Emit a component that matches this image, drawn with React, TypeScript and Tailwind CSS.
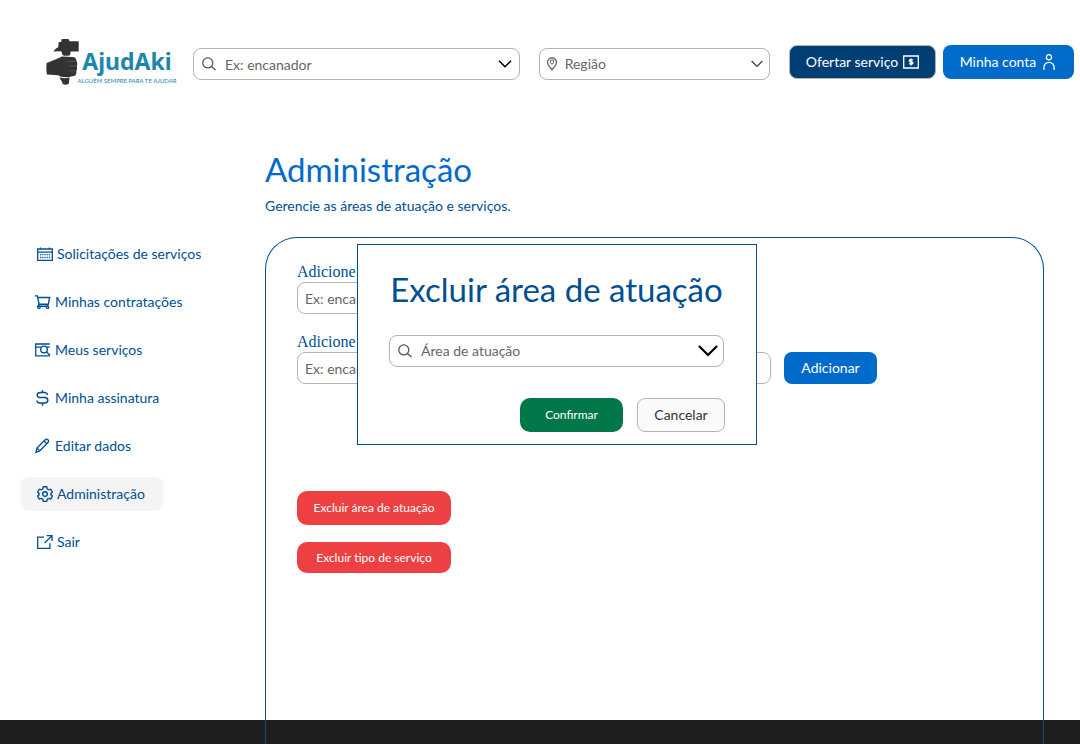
import React from "react";

type IconProps = { className?: string };

function Svg({ className = "size-4", children }: { className?: string; children: React.ReactNode }) {
  return (
    <svg
      viewBox="0 0 16 16"
      className={`shrink-0 ${className}`}
      fill="none"
      stroke="currentColor"
      strokeWidth="1.3"
      aria-hidden="true"
    >
      {children}
    </svg>
  );
}

const SearchIcon = ({ className }: IconProps) => (
  <Svg className={className}>
    <circle cx="6.800" cy="6.900" r="5" />
    <path d="M10.400 10.500 14.600 14" />
  </Svg>
);

const PinIcon = ({ className }: IconProps) => (
  <Svg className={className}>
    <path d="M8 13.800C5.400 10.900 3.500 8.700 3.500 6.300a4.500 4.300 0 0 1 9 0C12.500 8.700 10.600 10.900 8 13.800Z" />
    <path d="M6.500 4.200h3v2.300a1.500 1.500 0 0 1-3 0Z" strokeWidth="1" />
  </Svg>
);

const Chevron = ({ className }: IconProps) => (
  <svg viewBox="0 0 20 12" className={className} fill="none" stroke="currentColor" strokeWidth="2.200" aria-hidden="true">
    <path d="m1 1 9 9 9-9" />
  </svg>
);

const MoneyIcon = () => (
  <Svg>
    <path d="M.7 2h14.600v12H.7Z" />
    <path d="M9.800 6.300c-.6-.8-3.500-.9-3.500.4 0 1.500 3.600.8 3.600 2.400 0 1.300-3 1.200-3.700.3M8 4.500v7" strokeWidth="1.500" />
  </Svg>
);

const UserIcon = () => (
  <Svg>
    <circle cx="8" cy="3.200" r="2.600" />
    <path d="M2.900 15.900v-2.500a5.100 5.100 0 0 1 10.200 0v2.500" />
  </Svg>
);

const CalendarIcon = () => (
  <Svg>
    <path d="M.7 3h14.600v11.300H.7ZM.7 6.200h14.600M3.600 1.400V3M12.400 1.400V3" />
    <path d="M3 8.700h10.500M3 11.500h10.500" strokeDasharray="1.200 1" />
  </Svg>
);

const CartIcon = () => (
  <Svg>
    <path d="M0 1.900h2.400l1.700 8.400h9.200L14.700 3.500H2.800M4.100 10.300l-1.200 2h10.600" strokeWidth="1.400" />
    <circle cx="4" cy="13.200" r="1.200" />
    <circle cx="12.500" cy="13.200" r="1.200" />
  </Svg>
);

const BrowseIcon = () => (
  <Svg>
    <path d="M14.800 2H.7v11.800h14.100M.7 5.200h5.100M12 5.200h2.800" />
    <circle cx="9" cy="7.400" r="3.300" strokeWidth="1.400" />
    <path d="m11.200 9.700 3.800 3.600" strokeWidth="1.400" />
  </Svg>
);

const DollarIcon = () => (
  <Svg>
    <path
      d="M12.400 4.900c0-1.700-1.400-2.500-3-2.500H5.800C4 2.400 2.200 3.400 2.200 5S4 7.600 5.800 7.600h3.600c1.900 0 3.400 1 3.400 2.700s-1.500 2.700-3.400 2.700H5.600c-1.800 0-3.600-.9-3.600-2.600M7.500.3v2.100M7.500 13v2.700"
      strokeWidth="1.500"
    />
  </Svg>
);

const PencilIcon = () => (
  <Svg>
    <path d="m1 14.300 1-4.300 8.200-8.200c1.900-1.800 4.500.8 2.700 2.700L4.700 12.900 1 14.300Z" strokeWidth="1.400" />
    <path d="m9 3 2.900 2.900M2.300 10.100l2.400 2.500" />
  </Svg>
);

const GearIcon = () => (
  <Svg>
    <path
      d="M6.300.8h3.400l.5 2.100 1.500.9 2.100-.6 1.600 2.800-1.500 1.600v1l1.500 1.600-1.600 2.800-2.100-.6-1.500.9-.5 2.100H6.300l-.5-2.100-1.500-.9-2.100.6L.6 10.200l1.500-1.600v-1L.6 6l1.600-2.800 2.100.6 1.500-.9Z"
      strokeWidth="1.400"
    />
    <circle cx="8" cy="8.100" r="2.300" strokeWidth="1.400" />
  </Svg>
);

const ExitIcon = () => (
  <Svg>
    <path d="M7 3.200H.7v11.200h12.200V9.300M9.700 1.700h5.300V7M14.900 1.800 7.600 9" />
  </Svg>
);

const Logo = () => (
  <a href="#" className="flex shrink-0 items-center text-[#1c86ae]" aria-label="AjudAki">
    <svg viewBox="0 0 34 47" className="h-[47px] w-[34px] shrink-0" fill="#333" aria-hidden="true">
      <path d="M15.300.5 16.500 0h6l1 2.300h9.200v10.200h-8l-.7 3.800c-2.500.8-5 .7-7.300 0l-1.400-4-8 .2c1.400-1.800 2.900-3.200 4.900-4.200l.5-5.300h2.600Z" />
      <path d="M.7 23.900 10.500 20l5.500-2.500 10.500.4c2.400.1 4 1.400 4 4.200 1 1.800.9 3.500.2 5.200.6 1.700.4 3.300-.3 4.700.3 3.300-1 5.300-3.800 5.300l-4.600.9-6.200-.3-3.800-1.600L.9 35.400c-.7-3.800-.7-7.700-.2-11.500Z" />
      <path d="M21.500 22.300h8M22.500 27h7.500M22.500 31.800h7" stroke="#777" strokeWidth=".5" />
      <path d="M13.500 38.300c3.500 1.300 6.500 1.300 10 .2l-.6 6c-2.200 1.700-4.400 1.700-6.400.3-.3-2.900-2-3.400-3-6.500Z" />
    </svg>
    <span className="flex w-[94px] flex-col items-center pt-2">
      <span className="font-['Noto_Sans'] text-[23px] leading-[24px] font-bold">AjudAki</span>
      <span className="pt-1 font-['Lato'] text-[6px] leading-[8px] whitespace-nowrap">ALGUÉM SEMPRE PARA TE AJUDAR</span>
    </span>
  </a>
);

const navItems = [
  { label: "Solicitações de serviços", Icon: CalendarIcon, wide: true },
  { label: "Minhas contratações", Icon: CartIcon, wide: false },
  { label: "Meus serviços", Icon: BrowseIcon, wide: false },
  { label: "Minha assinatura", Icon: DollarIcon, wide: false },
  { label: "Editar dados", Icon: PencilIcon, wide: false },
  { label: "Administração", Icon: GearIcon, wide: true, active: true },
  { label: "Sair", Icon: ExitIcon, wide: true },
];

const field =
  "h-8 w-full appearance-none rounded-lg border border-[#b3b3b3] bg-white text-sm text-[#666] placeholder:text-[#666] placeholder:opacity-100";

const dangerButton =
  "w-[154px] rounded-[10px] bg-[#ed4043] text-center text-xs text-white";

export default function App() {
  return (
    <div className="flex min-h-screen flex-col bg-white font-['Lato',sans-serif] text-sm text-[#004f92]">
      <header className="flex items-start pt-[39px] pr-1.5 pl-[46px]">
        <Logo />
        <div className="relative mt-[9px] ml-[19px] min-w-0 flex-[24]">
          <SearchIcon className="absolute top-2 left-2 size-4 text-[#555]" />
          <input aria-label="Serviço" placeholder="Ex: encanador" className={`${field} pr-10 pl-[31px]`} />
          <button aria-label="Mostrar serviços" className="absolute top-0 right-2 flex h-8 items-center text-black">
            <Chevron className="h-2 w-[14px]" />
          </button>
        </div>
        <div className="relative mt-[9px] ml-[19px] min-w-0 flex-[17]">
          <PinIcon className="absolute top-2 left-[5px] size-4 text-[#666]" />
          <select aria-label="Região" className={`${field} pr-8 pl-[25px]`}>
            <option>Região</option>
          </select>
          <Chevron className="pointer-events-none absolute top-3 right-[7px] h-2 w-3 text-[#333f48]" />
        </div>
        <div className="mt-1.5 ml-[19px] flex shrink-0 gap-[7px] whitespace-nowrap text-white">
          <button className="flex h-[34px] w-[147px] items-center justify-center gap-[5px] rounded-lg border border-[#b3b3b3] bg-[#003e74]">
            Ofertar serviço <MoneyIcon />
          </button>
          <button className="flex h-[34px] w-[131px] items-center justify-center gap-[5px] rounded-lg bg-[#006bcb]">
            Minha conta <UserIcon />
          </button>
        </div>
      </header>

      <div className="flex flex-1 pt-[62px]">
        <nav className="flex w-[265px] shrink-0 flex-col items-start gap-[14px] pt-[89px] pl-[21px]">
          {navItems.map(({ label, Icon, wide, active }) => (
            <a
              key={label}
              href="#"
              aria-current={active ? "page" : undefined}
              className={`flex h-[34px] items-center gap-1 rounded-lg pr-[18px] ${wide ? "pl-4" : "pl-3.5"} ${active ? "bg-[#f4f4f4]" : ""}`}
            >
              <Icon />
              {label}
            </a>
          ))}
        </nav>

        <main className="relative z-10 -mb-6 flex min-w-0 flex-1 flex-col pr-9">
          <h1 className="text-[33px] leading-[42px] text-[#006bcb]">Administração</h1>
          <p className="pt-1.5 leading-5">Gerencie as áreas de atuação e serviços.</p>

          <section className="relative mt-[21px] flex flex-1 flex-col items-start rounded-t-[32px] border border-b-0 border-[#004f92] px-[31px] pt-6">
            <label htmlFor="area" className="font-['Liberation_Serif',serif] text-base leading-5">
              Adicione
            </label>
            <div className="flex w-[440px]">
              <input id="area" placeholder="Ex: encanador" className={`${field} px-[7px]`} />
            </div>
            <label htmlFor="tipo" className="mt-[18px] font-['Liberation_Serif',serif] text-base leading-5">
              Adicione
            </label>
            <div className="flex w-[580px] gap-[13px]">
              <input id="tipo" placeholder="Ex: encanador" className={`${field} min-w-0 px-[7px]`} />
              <button className="h-8 w-[93px] shrink-0 rounded-lg bg-[#006bcb] text-white">Adicionar</button>
            </div>
            <button className={`${dangerButton} mt-[107px] h-[34px]`}>Excluir área de atuação</button>
            <button className={`${dangerButton} mt-[17px] h-[31px]`}>Excluir tipo de serviço</button>

            <div
              role="dialog"
              aria-labelledby="dialog-title"
              className="absolute top-1.5 left-[91px] w-[400px] border border-[#004f92] bg-white pt-6 pr-8 pb-3 pl-[31px]"
            >
              <h2 id="dialog-title" className="text-center text-[33px] leading-[40px] whitespace-nowrap">
                Excluir área de atuação
              </h2>
              <div className="relative mt-[26px]">
                <SearchIcon className="absolute top-2 left-2 size-4 text-[#555]" />
                <select aria-label="Área de atuação" className={`${field} pr-10 pl-[31px]`}>
                  <option>Área de atuação</option>
                </select>
                <Chevron className="pointer-events-none absolute top-2.5 right-1.5 h-3 w-5 text-black" />
              </div>
              <div className="-mr-px mt-[31px] flex justify-end gap-[14px]">
                <button className="h-[34px] w-[103px] rounded-[10px] bg-[#007748] text-xs text-white">
                  Confirmar
                </button>
                <button className="h-[34px] w-[88px] rounded-lg border border-[#b3b3b3] bg-[#fafafa] text-[#333]">
                  Cancelar
                </button>
              </div>
            </div>
          </section>
        </main>
      </div>
      <footer className="h-6 shrink-0 bg-[#1e1e1e]" />
    </div>
  );
}
